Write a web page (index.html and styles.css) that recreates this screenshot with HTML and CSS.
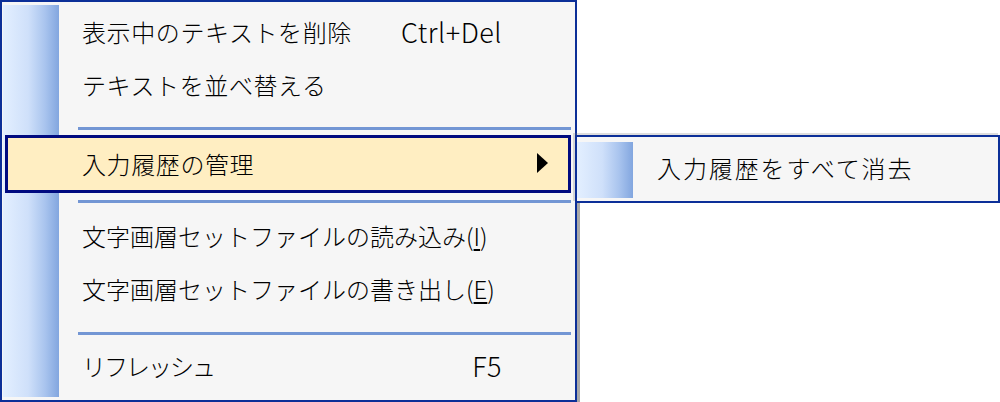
FILE: index.html
```html
<!DOCTYPE html>
<html lang="ja">
<head>
<meta charset="utf-8">
<title>Menu</title>
<link rel="stylesheet" href="styles.css">
</head>
<body>
<div class="screen">
  <div class="menu">
    <div class="item first"><span class="label">表示中のテキストを削除</span><span class="key">Ctrl+Del</span></div>
    <div class="item"><span class="label">テキストを並べ替える</span></div>
    <div class="sep"><div class="line"></div></div>
    <div class="item active"><span class="label">入力履歴の管理</span><span class="arrow"></span></div>
    <div class="sep tight"><div class="line"></div></div>
    <div class="item narrow"><span class="label">文字画層セットファイルの読み込み(<u>I</u>)</span></div>
    <div class="item narrow"><span class="label">文字画層セットファイルの書き出し(<u>E</u>)</span></div>
    <div class="sep wide"><div class="line"></div></div>
    <div class="item kana"><span class="label">リフレッシュ</span><span class="key">F5</span></div>
  </div>
  <div class="desk"><div class="edge"></div></div>
  <div class="submenu">
    <div class="subitem"><span class="label">入力履歴をすべて消去</span></div>
  </div>
</div>
</body>
</html>
```
FILE: styles.css
```css
html, body {
  margin: 0;
  padding: 0;
  background: #ffffff;
}
body {
  width: 1000px;
  height: 402px;
  overflow: hidden;
  font-family: "Noto Sans CJK JP", "Noto Sans", sans-serif;
  font-weight: 300;
  color: #000;
}
.screen {
  position: relative;
  display: flex;
  width: 1000px;
  height: 402px;
}
.menu {
  box-sizing: border-box;
  width: 577px;
  height: 402px;
  flex: none;
  border: 2px solid #0c2f98;
  padding: 4px 4px 7px 3px;
  background-color: #f6f6f6;
  background-image: linear-gradient(to right, #e3efff 0%, #cfe0fa 45%, #a9c4ee 75%, #82a6df 100%);
  background-repeat: no-repeat;
  background-position: 1px 3px;
  background-size: 56px calc(100% - 6px);
}
.item {
  box-sizing: border-box;
  height: 53px;
  display: flex;
  align-items: center;
  padding: 0 69px 2px 77px;
  font-size: 24px;
  letter-spacing: 0.6px;
  white-space: nowrap;
}
.item.narrow {
  letter-spacing: 0;
}
.item.kana {
  letter-spacing: -2px;
}
.item u {
  text-decoration-thickness: 2px;
  text-underline-offset: 3px;
}
.key {
  margin-left: auto;
  font-family: "Noto Sans CJK JP", "Noto Sans", sans-serif;
  font-weight: 300;
  font-size: 27px;
  letter-spacing: 0.5px;
}
.item.active {
  height: 58px;
  border: 3px solid #000a80;
  background: #ffeec2;
  padding: 0 20px 2px 74px;
}
.arrow {
  margin-left: auto;
  width: 0;
  height: 0;
  border-left: 11px solid #000;
  border-top: 10px solid transparent;
  border-bottom: 10px solid transparent;
}
.sep {
  box-sizing: border-box;
  height: 23px;
  padding: 15px 0 0 73px;
}
.sep.tight {
  height: 17px;
  padding-top: 7px;
}
.sep.wide {
  height: 24px;
  padding-top: 16px;
}
.line {
  height: 3px;
  background: #7396d4;
}
.desk {
  flex: 1;
  padding-top: 203px;
  display: flex;
}
.edge {
  width: 3px;
  background: #a8a8a8;
}
.submenu {
  position: absolute;
  left: 575px;
  top: 135px;
  box-sizing: border-box;
  width: 425px;
  height: 68px;
  border: 2px solid #0c2f98;
  background-color: #f6f6f6;
  background-image: linear-gradient(to right, #e3efff 0%, #cfe0fa 45%, #a9c4ee 75%, #82a6df 100%);
  background-repeat: no-repeat;
  background-position: 0 5px;
  background-size: 56px 56px;
  box-shadow: -2px -2px 0 rgba(120,120,120,0.25);
}
.subitem {
  box-sizing: border-box;
  height: 60px;
  display: flex;
  align-items: center;
  padding: 0 0 0 80px;
  font-size: 24px;
  letter-spacing: 1.9px;
  white-space: nowrap;
}
```
